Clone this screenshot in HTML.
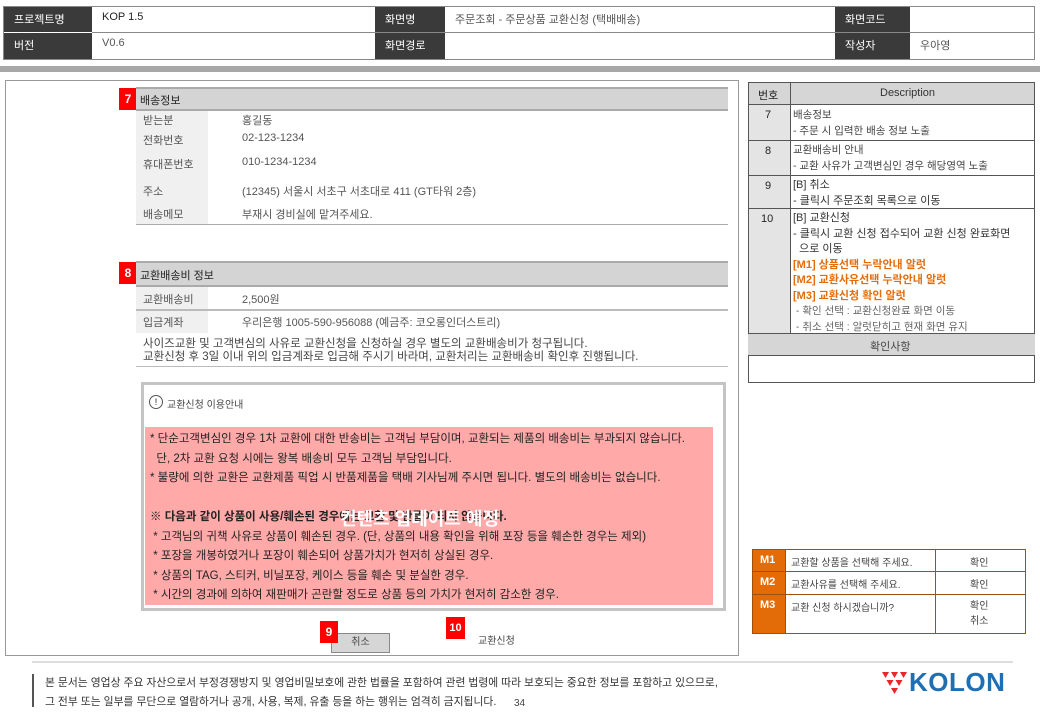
<!DOCTYPE html>
<html><head><meta charset="utf-8">
<style>
*{margin:0;padding:0;box-sizing:border-box}
body{width:1040px;height:720px;background:#fff;position:relative;overflow:hidden;font-family:"Liberation Sans","Noto Sans CJK KR",sans-serif;font-size:11px;color:#222}
.a{position:absolute}
.dk{background:#3a3a3a;color:#fff}
.lb{background:#f0f0f0}
.rb{background:#f00;color:#fff;font-weight:bold;font-size:12px;text-align:center;line-height:22px}
.gh{background:#d4d4d4;border-top:2px solid #aaa;border-bottom:2px solid #aaa}
.t{white-space:nowrap}
</style></head><body>
<!-- header -->
<div class="a" style="left:3px;top:6px;width:1032px;height:54px;background:#fff;border:1px solid #888"></div>
<div class="a dk t" style="left:4px;top:7px;width:88px;height:25px;padding:4px 10px">프로젝트명</div>
<div class="a t" style="left:102px;top:11px">KOP 1.5</div>
<div class="a dk t" style="left:375px;top:7px;width:70px;height:25px;padding:4px 10px">화면명</div>
<div class="a t" style="left:455px;top:11px;color:#555">주문조회 - 주문상품 교환신청 (택배배송)</div>
<div class="a dk t" style="left:835px;top:7px;width:75px;height:25px;padding:4px 10px">화면코드</div>
<div class="a dk t" style="left:4px;top:33px;width:88px;height:26px;padding:4px 10px">버전</div>
<div class="a t" style="left:102px;top:37px;color:#555">V0.6</div>
<div class="a dk t" style="left:375px;top:33px;width:70px;height:26px;padding:4px 10px">화면경로</div>
<div class="a dk t" style="left:835px;top:33px;width:75px;height:26px;padding:4px 10px">작성자</div>
<div class="a t" style="left:920px;top:37px;color:#555">우아영</div>
<div class="a" style="left:92px;top:32px;width:943px;height:1px;background:#888"></div>
<div class="a" style="left:0;top:66px;width:1040px;height:6px;background:#a8a8a8"></div>

<!-- main box -->
<div class="a" style="left:5px;top:80px;width:734px;height:576px;border:1px solid #999"></div>

<!-- section 7 -->
<div class="a rb" style="left:119px;top:88px;width:18px">7</div>
<div class="a gh t" style="left:136px;top:87px;width:592px;height:24px;padding:3px 4px">배송정보</div>
<div class="a lb" style="left:136px;top:111px;width:72px;height:113px"></div>
<div class="a" style="left:136px;top:224px;width:592px;height:1px;background:#aaa"></div>
<div class="a t" style="left:143px;top:112px;color:#555">받는분</div><div class="a t" style="left:242px;top:112px;color:#555">홍길동</div>
<div class="a t" style="left:143px;top:132px;color:#555">전화번호</div><div class="a t" style="left:242px;top:132px;color:#555">02-123-1234</div>
<div class="a t" style="left:143px;top:156px;color:#555">휴대폰번호</div><div class="a t" style="left:242px;top:156px;color:#555">010-1234-1234</div>
<div class="a t" style="left:143px;top:183px;color:#555">주소</div><div class="a t" style="left:242px;top:183px;color:#555">(12345) 서울시 서초구 서초대로 411 (GT타워 2층)</div>
<div class="a t" style="left:143px;top:206px;color:#555">배송메모</div><div class="a t" style="left:242px;top:206px;color:#555">부재시 경비실에 맡겨주세요.</div>

<!-- section 8 -->
<div class="a rb" style="left:119px;top:262px;width:18px">8</div>
<div class="a gh t" style="left:136px;top:261px;width:592px;height:26px;padding:4px 4px">교환배송비 정보</div>
<div class="a lb" style="left:136px;top:287px;width:72px;height:22px"></div>
<div class="a" style="left:136px;top:309px;width:592px;height:2px;background:#bbb"></div>
<div class="a lb" style="left:136px;top:311px;width:72px;height:22px"></div>
<div class="a t" style="left:143px;top:291px;color:#555">교환배송비</div><div class="a t" style="left:242px;top:291px;color:#555">2,500원</div>
<div class="a t" style="left:143px;top:314px;color:#555">입금계좌</div><div class="a t" style="left:242px;top:314px;color:#555">우리은행 1005-590-956088 (예금주: 코오롱인더스트리)</div>
<div class="a t" style="left:143px;top:335px;color:#444;font-size:11.5px">사이즈교환 및 고객변심의 사유로 교환신청을 신청하실 경우 별도의 교환배송비가 청구됩니다.</div>
<div class="a t" style="left:143px;top:348px;color:#444;font-size:11.5px">교환신청 후 3일 이내 위의 입금계좌로 입금해 주시기 바라며, 교환처리는 교환배송비 확인후 진행됩니다.</div>
<div class="a" style="left:136px;top:366px;width:592px;height:1px;background:#bbb"></div>

<!-- notice box -->
<div class="a" style="left:141px;top:382px;width:585px;height:229px;border:3px solid #c4c4c4;background:#fff"></div>
<div class="a" style="left:149px;top:395px;width:14px;height:14px;border:1px solid #555;border-radius:50%;font-size:9px;text-align:center;line-height:12px">!</div>
<div class="a t" style="left:167px;top:396px;font-size:10px;color:#444">교환신청 이용안내</div>
<div class="a" style="left:145px;top:427px;width:568px;height:178px;background:#ffa9a9"></div>
<div class="a" style="left:150px;top:430px;font-size:11.5px;line-height:19.5px;color:#222">
<div class="t">* 단순고객변심인 경우 1차 교환에 대한 반송비는 고객님 부담이며, 교환되는 제품의 배송비는 부과되지 않습니다.</div>
<div class="t">&nbsp;&nbsp;단, 2차 교환 요청 시에는 왕복 배송비 모두 고객님 부담입니다.</div>
<div class="t">* 불량에 의한 교환은 교환제품 픽업 시 반품제품을 택배 기사님께 주시면 됩니다. 별도의 배송비는 없습니다.</div>
<div style="height:19.5px"></div>
<div class="t" style="font-weight:bold">※ 다음과 같이 상품이 사용/훼손된 경우에는 교환 및 반품이 되지 않습니다.</div>
<div class="t">&nbsp;* 고객님의 귀책 사유로 상품이 훼손된 경우. (단, 상품의 내용 확인을 위해 포장 등을 훼손한 경우는 제외)</div>
<div class="t">&nbsp;* 포장을 개봉하였거나 포장이 훼손되어 상품가치가 현저히 상실된 경우.</div>
<div class="t">&nbsp;* 상품의 TAG, 스티커, 비닐포장, 케이스 등을 훼손 및 분실한 경우.</div>
<div class="t">&nbsp;* 시간의 경과에 의하여 재판매가 곤란할 정도로 상품 등의 가치가 현저히 감소한 경우.</div>
</div>
<div class="a t" style="left:340px;top:505px;font-size:18px;font-weight:bold;color:#fff">컨텐츠 업데이트 예정</div>

<!-- buttons -->
<div class="a" style="left:331px;top:633px;width:59px;height:20px;background:#d6d6d6;border:1px solid #888;text-align:center;line-height:18px;font-size:10px;color:#444">취소</div>
<div class="a rb" style="left:320px;top:621px;width:18px">9</div>
<div class="a rb" style="left:446px;top:617px;width:19px;font-size:11px">10</div>
<div class="a t" style="left:478px;top:632px;font-size:10px;color:#444">교환신청</div>

<!-- right panel -->
<div class="a" style="left:748px;top:82px;width:287px;height:301px;border:1px solid #555;background:#fff"></div>
<div class="a" style="left:748px;top:82px;width:287px;height:23px;background:#d6d6d6;border:1px solid #555"></div>
<div class="a t" style="left:758px;top:87px">번호</div>
<div class="a" style="left:790px;top:82px;width:1px;height:251px;background:#555"></div>
<div class="a t" style="left:880px;top:87px;color:#333">Description</div>
<div class="a" style="left:749px;top:105px;width:41px;height:228px;background:#e4e4e4"></div>
<div class="a" style="left:748px;top:140px;width:287px;height:1px;background:#555"></div>
<div class="a" style="left:748px;top:175px;width:287px;height:1px;background:#555"></div>
<div class="a" style="left:748px;top:208px;width:287px;height:1px;background:#555"></div>
<div class="a" style="left:748px;top:333px;width:287px;height:23px;background:#d6d6d6;border-top:1px solid #555;border-bottom:1px solid #555"></div>
<div class="a t" style="left:870px;top:338px;color:#444">확인사항</div>
<div class="a t" style="left:765px;top:109px">7</div>
<div class="a t" style="left:765px;top:145px">8</div>
<div class="a t" style="left:765px;top:180px">9</div>
<div class="a t" style="left:761px;top:213px">10</div>
<div class="a" style="left:793px;top:107px;line-height:16px;font-size:10.5px;color:#444">
<div class="t">배송정보</div><div class="t">- 주문 시 입력한 배송 정보 노출</div></div>
<div class="a" style="left:793px;top:142px;line-height:16px;font-size:10.5px;color:#444">
<div class="t">교환배송비 안내</div><div class="t">- 교환 사유가 고객변심인 경우 해당영역 노출</div></div>
<div class="a" style="left:793px;top:177px;line-height:16px;font-size:11px;color:#333">
<div class="t">[B] 취소</div><div class="t">- 클릭시 주문조회 목록으로 이동</div></div>
<div class="a" style="left:793px;top:211px;line-height:15.5px;font-size:11px;color:#333">
<div class="t">[B] 교환신청</div><div class="t">- 클릭시 교환 신청 접수되어 교환 신청 완료화면</div><div class="t">&nbsp;&nbsp;으로 이동</div>
<div class="t" style="color:#e46c0a;font-weight:bold">[M1] 상품선택 누락안내 알럿</div>
<div class="t" style="color:#e46c0a;font-weight:bold">[M2] 교환사유선택 누락안내 알럿</div>
<div class="t" style="color:#e46c0a;font-weight:bold">[M3] 교환신청 확인 알럿</div>
<div class="t" style="color:#666;font-size:10.5px">&nbsp;- 확인 선택 : 교환신청완료 화면 이동</div>
<div class="t" style="color:#666;font-size:10.5px">&nbsp;- 취소 선택 : 알럿닫히고 현재 화면 유지</div></div>

<!-- message table -->
<div class="a" style="left:752px;top:549px;width:274px;height:85px;border:1px solid #a0500a;background:#fff"></div>
<div class="a" style="left:753px;top:550px;width:32px;height:83px;background:#e36c09"></div>
<div class="a" style="left:785px;top:549px;width:1px;height:85px;background:#a0500a"></div>
<div class="a" style="left:935px;top:549px;width:1px;height:85px;background:#a0500a"></div>
<div class="a" style="left:752px;top:571px;width:274px;height:1px;background:#a0500a"></div>
<div class="a" style="left:752px;top:594px;width:274px;height:1px;background:#a0500a"></div>
<div class="a t" style="left:760px;top:554px;color:#fff;font-weight:bold">M1</div>
<div class="a t" style="left:760px;top:576px;color:#fff;font-weight:bold">M2</div>
<div class="a t" style="left:760px;top:599px;color:#fff;font-weight:bold">M3</div>
<div class="a t" style="left:791px;top:554px;font-size:10px;color:#444">교환할 상품을 선택해 주세요.</div>
<div class="a t" style="left:791px;top:576px;font-size:10px;color:#444">교환사유를 선택해 주세요.</div>
<div class="a t" style="left:791px;top:599px;font-size:10px;color:#444">교환 신청 하시겠습니까?</div>
<div class="a t" style="left:970px;top:554px;font-size:10px;color:#444">확인</div>
<div class="a t" style="left:970px;top:576px;font-size:10px;color:#444">확인</div>
<div class="a t" style="left:970px;top:599px;font-size:10px;color:#444;line-height:15px">확인<br>취소</div>

<!-- footer -->
<div class="a" style="left:32px;top:661px;width:981px;height:2px;background:#ddd"></div>
<div class="a" style="left:32px;top:674px;width:2px;height:33px;background:#555"></div>
<div class="a t" style="left:45px;top:674px;font-size:10.8px;color:#333">본 문서는 영업상 주요 자산으로서 부정경쟁방지 및 영업비밀보호에 관한 법률을 포함하여 관련 법령에 따라 보호되는 중요한 정보를 포함하고 있으므로,</div>
<div class="a t" style="left:45px;top:693px;font-size:10.8px;color:#333">그 전부 또는 일부를 무단으로 열람하거나 공개, 사용, 복제, 유출 등을 하는 행위는 엄격히 금지됩니다.</div>
<div class="a t" style="left:514px;top:698px;font-size:10px;color:#444">34</div>
<svg class="a" style="left:882px;top:672px" width="26" height="22" viewBox="0 0 26 22">
<g fill="#e8262b"><polygon points="0,0 7,0 3.5,6"/><polygon points="9,0 16,0 12.5,6"/><polygon points="18,0 25,0 21.5,6"/>
<polygon points="4.5,8 11.5,8 8,14"/><polygon points="13.5,8 20.5,8 17,14"/><polygon points="9,16 16,16 12.5,22"/></g></svg>
<div class="a t" style="left:909px;top:667px;font-size:26px;font-weight:bold;color:#1e6fb4;letter-spacing:0.5px">KOLON</div>
</body></html>
